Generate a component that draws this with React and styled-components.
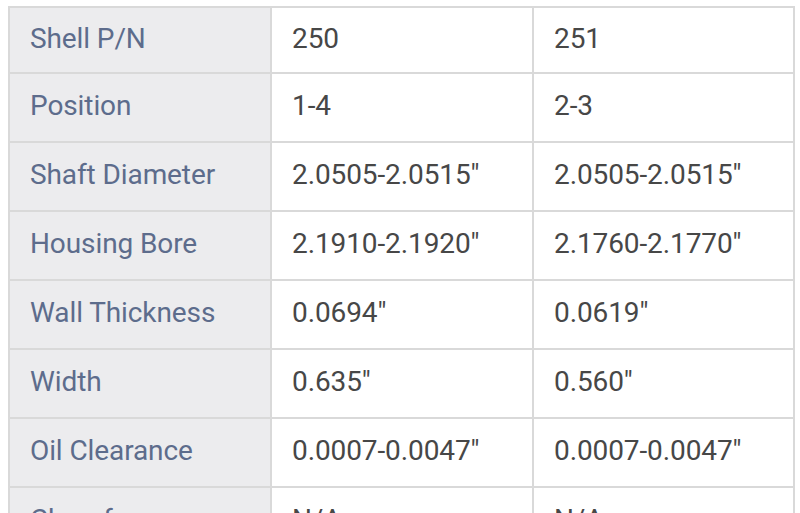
import React from 'react';
import styled, { createGlobalStyle } from 'styled-components';

const GlobalStyle = createGlobalStyle`
  html, body {
    margin: 0;
    padding: 0;
    background: #ffffff;
    overflow: hidden;
  }
  body {
    font-family: Roboto, "Liberation Sans", Arial, sans-serif;
  }
`;

const Page = styled.div`
  padding: 6px 0 0 8px;
`;

const Grid = styled.div`
  display: grid;
  grid-template-columns: 260px 260px 259px;
  gap: 2px;
  width: max-content;
  border: 2px solid #d9d9d9;
  background: #d9d9d9;
`;

const Cell = styled.div`
  height: ${(p) => (p.$first ? '64px' : '67px')};
  display: flex;
  align-items: center;
  padding: 0 20px 4px;
  box-sizing: border-box;
  font-size: 28px;
  letter-spacing: -0.1px;
  white-space: nowrap;
  background: ${(p) => (p.$head ? '#ececee' : '#ffffff')};
  color: ${(p) => (p.$head ? '#5d6c8c' : '#474747')};
`;

const rows = [
  ['Shell P/N', '250', '251'],
  ['Position', '1-4', '2-3'],
  ['Shaft Diameter', '2.0505-2.0515"', '2.0505-2.0515"'],
  ['Housing Bore', '2.1910-2.1920"', '2.1760-2.1770"'],
  ['Wall Thickness', '0.0694"', '0.0619"'],
  ['Width', '0.635"', '0.560"'],
  ['Oil Clearance', '0.0007-0.0047"', '0.0007-0.0047"'],
  ['Chamfer', 'N/A', 'N/A'],
];

export default function App() {
  return (
    <>
      <GlobalStyle />
      <Page>
        <Grid>
          {rows.map(([label, a, b], i) => (
            <React.Fragment key={label}>
              <Cell $head $first={i === 0}>{label}</Cell>
              <Cell $first={i === 0}>{a}</Cell>
              <Cell $first={i === 0}>{b}</Cell>
            </React.Fragment>
          ))}
        </Grid>
      </Page>
    </>
  );
}
